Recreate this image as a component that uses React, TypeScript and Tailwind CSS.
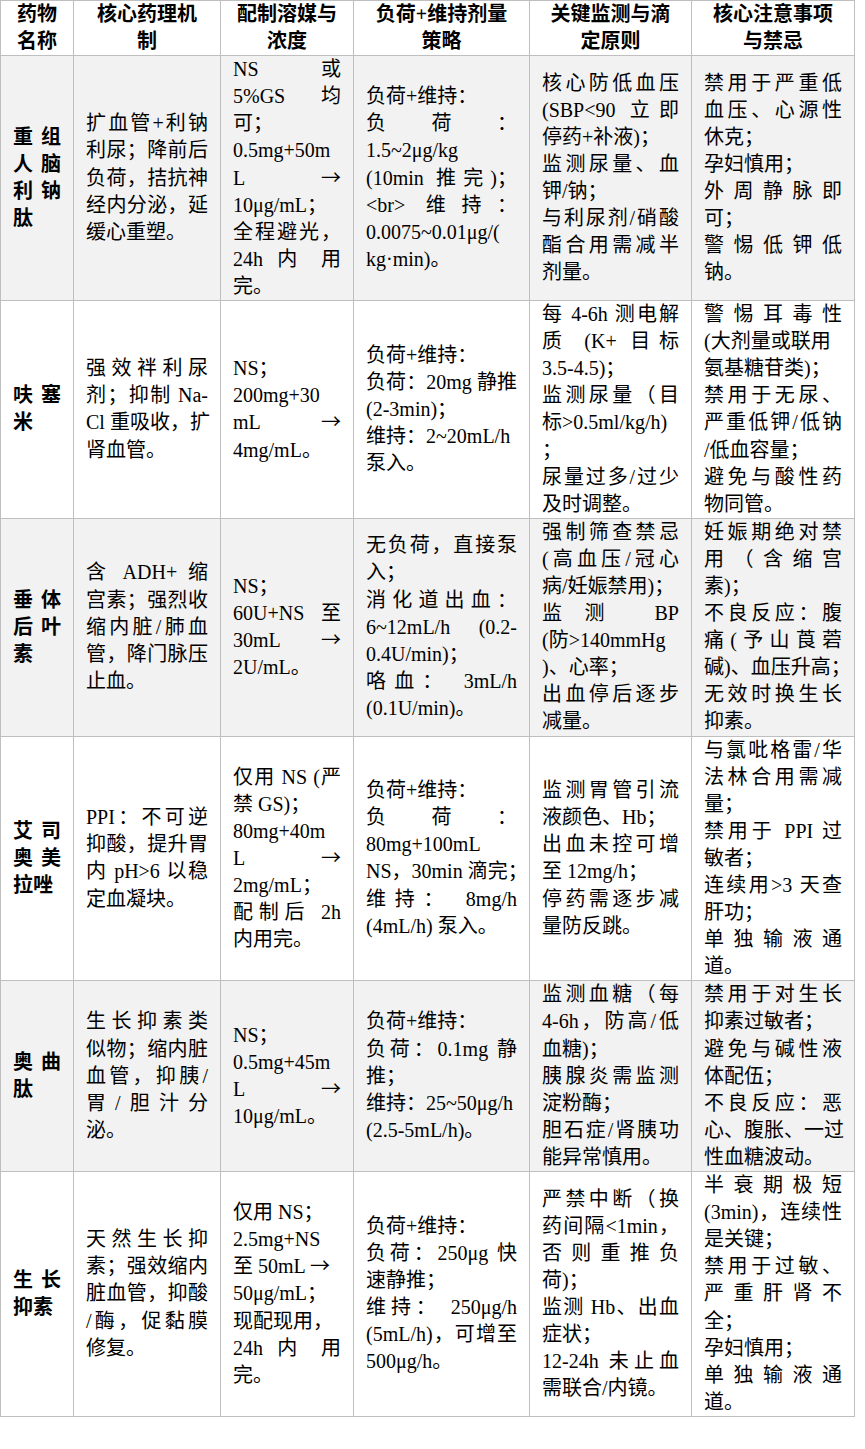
import React from "react";

const headers: string[][] = [
  ["药物", "名称"],
  ["核心药理机", "制"],
  ["配制溶媒与", "浓度"],
  ["负荷+维持剂量", "策略"],
  ["关键监测与滴", "定原则"],
  ["核心注意事项", "与禁忌"],
];

const rows: string[][] = [
  [
    "^重组|^人脑|^利钠|肽",
    "^扩血管+利钠|^利尿；降前后|^负荷，拮抗神|^经内分泌，延|缓心重塑。",
    "^NS 或|^5%GS 均|可；|0.5mg+50m|^L →|10μg/mL；|^全程避光，|^24h 内 用|完。",
    "负荷+维持：|^负荷：|1.5~2μg/kg|^(10min 推完)；|^<br> 维持：|0.0075~0.01μg/(|kg·min)。",
    "^核心防低血压|^(SBP<90 立即|停药+补液)；|^监测尿量、血|钾/钠；|^与利尿剂/硝酸|^酯合用需减半|剂量。",
    "^禁用于严重低|^血压、心源性|休克；|孕妇慎用；|^外周静脉即|可；|^警惕低钾低|钠。",
  ],
  [
    "^呋塞|米",
    "^强效袢利尿|^剂；抑制 Na-|^Cl 重吸收，扩|肾血管。",
    "NS；|200mg+30|^mL →|4mg/mL。",
    "负荷+维持：|^负荷：20mg 静推|(2-3min)；|维持：2~20mL/h|泵入。",
    "^每 4-6h 测电解|^质 (K+ 目标|3.5-4.5)；|^监测尿量（目|标>0.5ml/kg/h)|；|^尿量过多/过少|及时调整。",
    "^警惕耳毒性|(大剂量或联用|氨基糖苷类)；|^禁用于无尿、|^严重低钾/低钠|/低血容量；|^避免与酸性药|物同管。",
  ],
  [
    "^垂体|^后叶|素",
    "^含 ADH+ 缩|^宫素；强烈收|^缩内脏/肺血|^管，降门脉压|止血。",
    "NS；|^60U+NS 至|^30mL →|2U/mL。",
    "^无负荷，直接泵|入；|^消化道出血：|^6~12mL/h (0.2-|0.4U/min)；|^咯血： 3mL/h|(0.1U/min)。",
    "^强制筛查禁忌|^(高血压/冠心|病/妊娠禁用)；|^监测 BP|(防>140mmHg|)、心率；|^出血停后逐步|减量。",
    "^妊娠期绝对禁|^用（含缩宫|素)；|^不良反应：腹|^痛(予山莨菪|碱)、血压升高；|^无效时换生长|抑素。",
  ],
  [
    "^艾司|^奥美|拉唑",
    "^PPI：不可逆|^抑酸，提升胃|^内 pH>6 以稳|定血凝块。",
    "^仅用 NS (严|禁 GS)；|80mg+40m|^L →|2mg/mL；|^配制后 2h|内用完。",
    "负荷+维持：|^负荷：|80mg+100mL|^NS，30min 滴完；|^维持： 8mg/h|(4mL/h) 泵入。",
    "^监测胃管引流|液颜色、Hb；|^出血未控可增|至 12mg/h；|^停药需逐步减|量防反跳。",
    "^与氯吡格雷/华|^法林合用需减|量；|^禁用于 PPI 过|敏者；|^连续用>3 天查|肝功；|^单独输液通|道。",
  ],
  [
    "^奥曲|肽",
    "^生长抑素类|^似物；缩内脏|^血管，抑胰/|^胃/胆汁分|泌。",
    "NS；|0.5mg+45m|^L →|10μg/mL。",
    "负荷+维持：|^负荷：0.1mg 静|推；|维持：25~50μg/h|(2.5-5mL/h)。",
    "^监测血糖（每|^4-6h，防高/低|血糖)；|^胰腺炎需监测|淀粉酶；|^胆石症/肾胰功|能异常慎用。",
    "^禁用于对生长|抑素过敏者；|^避免与碱性液|体配伍；|^不良反应：恶|^心、腹胀、一过|性血糖波动。",
  ],
  [
    "^生长|抑素",
    "^天然生长抑|^素；强效缩内|^脏血管，抑酸|^/酶，促黏膜|修复。",
    "仅用 NS；|2.5mg+NS|至 50mL →|50μg/mL；|现配现用，|^24h 内 用|完。",
    "负荷+维持：|^负荷：250μg 快|速静推；|^维持： 250μg/h|^(5mL/h)，可增至|500μg/h。",
    "^严禁中断（换|^药间隔<1min，|^否则重推负|荷)；|^监测 Hb、出血|症状；|^12-24h 未止血|需联合/内镜。",
    "^半衰期极短|^(3min)，连续性|是关键；|^禁用于过敏、|^严重肝肾不|全；|孕妇慎用；|^单独输液通|道。",
  ],
];

function renderLine(s: string) {
  const parts = s.split("→");
  if (parts.length === 1) return s;
  const out: React.ReactNode[] = [];
  parts.forEach((p, i) => {
    out.push(p);
    if (i < parts.length - 1)
      out.push(
        <span
          key={i}
          className="leading-none [font-family:'Noto_Sans_CJK_SC',sans-serif]"
        >
          →
        </span>
      );
  });
  return out;
}

function Cell({ text, bold }: { text: string; bold?: boolean }) {
  const lines = text.split("|");
  return (
    <td
      className={
        "border border-[#bfbfbf] px-3 py-0 align-middle" +
        (bold ? " font-bold" : "")
      }
    >
      {lines.map((l, i) =>
        l.startsWith("^") ? (
          <div
            key={i}
            className="h-[27.1px] whitespace-nowrap text-justify [text-align-last:justify]"
          >
            {renderLine(l.slice(1))}
          </div>
        ) : (
          <div key={i} className="h-[27.1px] whitespace-nowrap text-left">
            {renderLine(l)}
          </div>
        )
      )}
    </td>
  );
}

export default function App() {
  return (
    <div className="min-h-[1449px] w-[865px] bg-white text-black">
      <table className="w-[854px] table-fixed border-collapse text-[20px] leading-[27.1px] [font-family:'Liberation_Serif','Noto_Sans_CJK_SC',serif]">
        <colgroup>
          <col className="w-[73px]" />
          <col className="w-[147px]" />
          <col className="w-[133px]" />
          <col className="w-[176px]" />
          <col className="w-[162px]" />
          <col className="w-[163px]" />
        </colgroup>
        <thead>
          <tr className="bg-white">
            {headers.map((h, i) => (
              <th
                key={i}
                className="border border-[#bfbfbf] px-1 py-0 text-center align-middle font-bold"
              >
                {h.map((l, j) => (
                  <div key={j} className="whitespace-nowrap">
                    {l}
                  </div>
                ))}
              </th>
            ))}
          </tr>
        </thead>
        <tbody>
          {rows.map((r, i) => (
            <tr key={i} className={i % 2 === 0 ? "bg-[#f2f2f2]" : "bg-white"}>
              {r.map((c, j) => (
                <Cell key={j} text={c} bold={j === 0} />
              ))}
            </tr>
          ))}
        </tbody>
      </table>
    </div>
  );
}
